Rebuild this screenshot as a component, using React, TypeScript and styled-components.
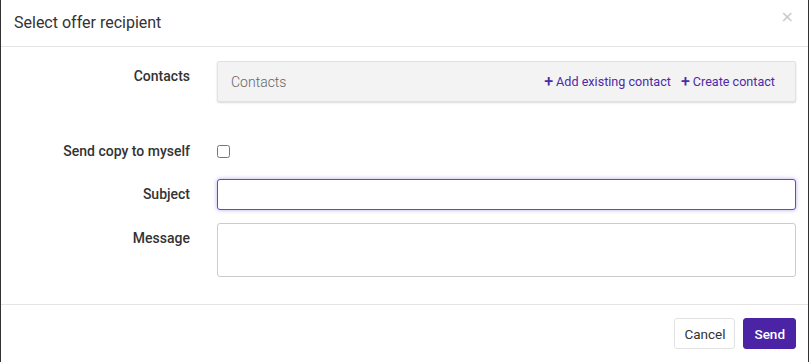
import React from "react";
import styled, { createGlobalStyle } from "styled-components";

const GlobalStyle = createGlobalStyle`
  html, body {
    margin: 0;
    padding: 0;
    background: #fff;
  }
  body {
    font-family: Roboto, "Liberation Sans", sans-serif;
    color: #333;
  }
`;

const Modal = styled.div`
  width: 809px;
  height: 362px;
  box-sizing: border-box;
  border-left: 1px solid #333;
  border-right: 1px solid #333;
  display: flex;
  flex-flow: column;
  background: #fff;
`;

const Header = styled.header`
  height: 47px;
  box-sizing: border-box;
  border-bottom: 1px solid #e5e5e5;
  display: flex;
  align-items: center;
  justify-content: space-between;
  padding: 0 14px 2px 13px;
`;

const Title = styled.h4`
  margin: 0;
  font-size: 16px;
  font-weight: 400;
  color: #333;
`;

const Close = styled.button`
  border: 0;
  background: none;
  padding: 0;
  font-size: 16px;
  line-height: 1;
  color: #c8c8c8;
  font-family: "DejaVu Sans", sans-serif;
  margin-top: -10px;
  cursor: pointer;
`;

const Body = styled.main`
  flex: 1;
  display: grid;
  grid-template-columns: 174px 1fr;
  column-gap: 27px;
  align-content: start;
  padding: 14px 12px 0 15px;
`;

const Label = styled.label<{ $top?: number }>`
  font-size: 14px;
  font-weight: 500;
  color: #333;
  text-align: right;
  padding-top: ${(p) => p.$top ?? 7}px;
`;

const Field = styled.div<{ $gap?: number }>`
  margin-bottom: ${(p) => p.$gap ?? 14}px;
`;

const ContactsBox = styled.div`
  height: 41px;
  box-sizing: border-box;
  background: #f3f3f3;
  border: 1px solid #e2e2e2;
  border-radius: 2px;
  box-shadow: 0 1px 2px rgba(0, 0, 0, 0.15);
  display: flex;
  align-items: center;
  justify-content: space-between;
  padding: 0 20px 0 13px;
`;

const Placeholder = styled.span`
  font-size: 14px;
  font-weight: 300;
  color: #666;
`;

const Actions = styled.div`
  display: flex;
  gap: 10px;
`;

const ActionLink = styled.a`
  font-size: 12.6px;
  color: #4d2aa8;
  text-decoration: none;
  display: flex;
  align-items: center;
  gap: 3px;
`;

const Plus = styled.span`
  font-size: 16px;
  font-weight: 500;
  line-height: 1;
`;

const Check = styled.input`
  width: 13px;
  height: 13px;
  margin: 2px 0 0;
  accent-color: #4d2aa8;
`;

const TextInput = styled.input`
  display: block;
  width: 100%;
  height: 31px;
  box-sizing: border-box;
  border: 1px solid #6a45d4;
  border-radius: 3px;
  box-shadow: 0 0 4px rgba(106, 69, 212, 0.45);
  outline: none;
  font-family: inherit;
  font-size: 14px;
  padding: 0 10px;
`;

const TextArea = styled.textarea`
  display: block;
  width: 100%;
  height: 54px;
  box-sizing: border-box;
  border: 1px solid #ccc;
  border-radius: 3px;
  resize: none;
  outline: none;
  font-family: inherit;
  font-size: 14px;
  padding: 6px 10px;
`;

const Footer = styled.footer`
  height: 58px;
  box-sizing: border-box;
  border-top: 1px solid #e5e5e5;
  display: flex;
  justify-content: flex-end;
  align-items: flex-start;
  gap: 8px;
  padding: 13px 12px 0 0;
`;

const Button = styled.button<{ $primary?: boolean }>`
  height: 31px;
  box-sizing: border-box;
  padding: 0 ${(p) => (p.$primary ? 10 : 9)}px;
  border-radius: 3px;
  font-family: inherit;
  font-size: 13.5px;
  font-weight: ${(p) => (p.$primary ? 500 : 400)};
  border: 1px solid ${(p) => (p.$primary ? "#4a24a5" : "#e2e2e2")};
  background: ${(p) => (p.$primary ? "#4a24a5" : "#fff")};
  color: ${(p) => (p.$primary ? "#fff" : "#333")};
  cursor: pointer;
`;

const App = (): JSX.Element => (
  <>
    <GlobalStyle />
    <Modal>
      <Header>
        <Title>Select offer recipient</Title>
        <Close aria-label="Close">×</Close>
      </Header>

      <Body>
        <Label $top={7}>Contacts</Label>
        <Field $gap={41}>
          <ContactsBox>
            <Placeholder>Contacts</Placeholder>
            <Actions>
              <ActionLink href="#">
                <Plus>+</Plus>Add existing contact
              </ActionLink>
              <ActionLink href="#">
                <Plus>+</Plus>Create contact
              </ActionLink>
            </Actions>
          </ContactsBox>
        </Field>

        <Label $top={0}>Send copy to myself</Label>
        <Field $gap={17}>
          <Check type="checkbox" />
        </Field>

        <Label>Subject</Label>
        <Field $gap={13}>
          <TextInput type="text" />
        </Field>

        <Label>Message</Label>
        <Field>
          <TextArea />
        </Field>
      </Body>

      <Footer>
        <Button>Cancel</Button>
        <Button $primary>Send</Button>
      </Footer>
    </Modal>
  </>
);

export default App;
